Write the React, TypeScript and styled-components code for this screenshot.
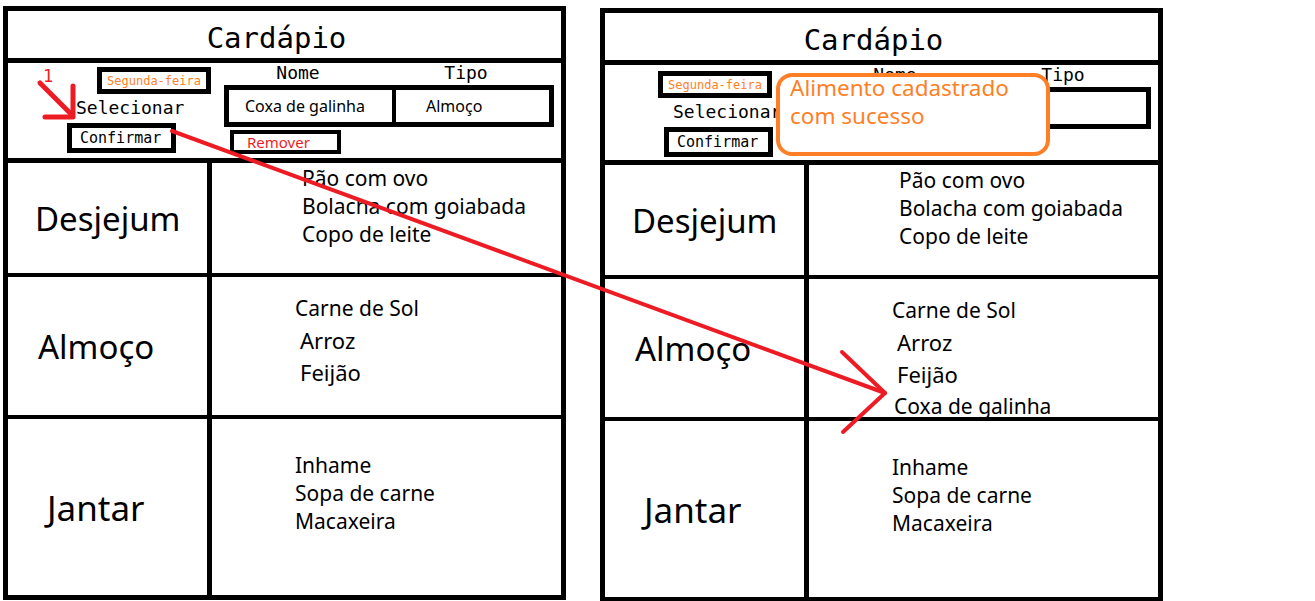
import React from 'react';
import styled, { createGlobalStyle } from 'styled-components';

const RED = '#ed1c24';
const ORANGE = '#ff7f27';
const MONO = '"DejaVu Sans Mono", monospace';
const SANS = '"Noto Sans", sans-serif';

const GlobalStyle = createGlobalStyle`
  html, body { margin: 0; padding: 0; background: #fff; }
  body {
    width: 1315px;
    height: 601px;
    overflow: hidden;
    font-family: ${SANS};
    color: #000;
  }
`;

type Item = { text: string; indent: number; size?: number };
type Meal = {
  label: string;
  labelPad: number;
  labelSize: number;
  top: number;
  lh: number;
  items: Item[];
};

const baseMeals = (extra: Item[]): Meal[] => [
  {
    label: 'Desjejum',
    labelPad: 27,
    labelSize: 33,
    top: 1,
    lh: 28,
    items: [
      { text: 'Pão com ovo', indent: 90 },
      { text: 'Bolacha com goiabada', indent: 90 },
      { text: 'Copo de leite', indent: 90 },
    ],
  },
  {
    label: 'Almoço',
    labelPad: 30,
    labelSize: 33,
    top: 15,
    lh: 32,
    items: [
      { text: 'Carne de Sol', indent: 83 },
      { text: 'Arroz', indent: 88, size: 22 },
      { text: 'Feijão', indent: 88, size: 22 },
      ...extra,
    ],
  },
  {
    label: 'Jantar',
    labelPad: 39,
    labelSize: 35,
    top: 32,
    lh: 28,
    items: [
      { text: 'Inhame', indent: 83 },
      { text: 'Sopa de carne', indent: 83 },
      { text: 'Macaxeira', indent: 83 },
    ],
  },
];

const Page = styled.div`
  position: relative;
  display: flex;
  align-items: flex-start;
  gap: 34px;
  padding-left: 3px;
  width: 1315px;
  height: 601px;
  box-sizing: border-box;
`;

const Panel = styled.section<{ $top: number }>`
  margin-top: ${(p) => p.$top}px;
  width: 563px;
  height: 594px;
  box-sizing: border-box;
  border: 5px solid #000;
  display: flex;
  flex-direction: column;
`;

const TitleBar = styled.header`
  height: 52px;
  box-sizing: border-box;
  border-bottom: 5px solid #000;
  display: flex;
  justify-content: center;
  padding: 7px 16px 0 0;
  font: 29px ${MONO};
  line-height: 40px;
`;

const Controls = styled.div`
  position: relative;
  height: 100px;
  box-sizing: border-box;
  border-bottom: 5px solid #000;
  display: flex;
`;

const DayColumn = styled.div`
  width: 216px;
  flex: 0 0 auto;
  display: flex;
  flex-direction: column;
  align-items: flex-start;
`;

const DayBox = styled.div<{ $left: number; $top: number }>`
  margin: ${(p) => p.$top}px 0 0 ${(p) => p.$left}px;
  width: 114px;
  height: 27px;
  box-sizing: border-box;
  border: 5px solid #000;
  display: flex;
  align-items: center;
  justify-content: center;
  color: ${ORANGE};
  font: 12px ${MONO};
`;

const SelectLabel = styled.div`
  margin: 2px 0 0 68px;
  font: 18px ${MONO};
  line-height: 24px;
`;

const ConfirmButton = styled.div`
  margin: 3px 0 0 59px;
  width: 109px;
  height: 30px;
  box-sizing: border-box;
  border: 5px solid #000;
  display: flex;
  align-items: center;
  padding-left: 8px;
  font: 15px ${MONO};
`;

const FormColumn = styled.div`
  display: flex;
  flex-direction: column;
  align-items: flex-start;
`;

const HeaderRow = styled.div`
  display: flex;
  height: 22px;
  font: 18px ${MONO};
  line-height: 20px;
`;

const HeaderCell = styled.div<{ $w: number }>`
  width: ${(p) => p.$w}px;
  text-align: center;
`;

const Field = styled.div`
  display: flex;
  width: 330px;
  height: 42px;
  box-sizing: border-box;
  border: 5px solid #000;
  font: 16px ${SANS};
`;

const FieldCell = styled.div<{ $w?: number; $pad: number }>`
  ${(p) => (p.$w ? `width: ${p.$w}px; border-right: 4px solid #000;` : 'flex: 1;')}
  box-sizing: border-box;
  display: flex;
  align-items: center;
  padding-left: ${(p) => p.$pad}px;
`;

const RemoveButton = styled.div`
  margin: 3px 0 0 6px;
  width: 111px;
  height: 24px;
  box-sizing: border-box;
  border: 4px solid #000;
  display: flex;
  align-items: center;
  padding-left: 13px;
  color: ${RED};
  font: 15px ${SANS};
`;

const Toast = styled.div`
  position: absolute;
  left: 171px;
  top: 8px;
  width: 274px;
  height: 83px;
  box-sizing: border-box;
  border: 4px solid ${ORANGE};
  border-radius: 16px;
  background: #fff;
  padding: 0 10px;
  color: ${ORANGE};
  font: 22.5px ${SANS};
  line-height: 28px;
`;

const ToastText = styled.p`
  margin: -3px 0 0;
`;

const Row = styled.div<{ $h?: number }>`
  display: flex;
  ${(p) => (p.$h ? `height: ${p.$h}px; border-bottom: 4px solid #000;` : 'flex: 1;')}
  box-sizing: content-box;
`;

const MealLabel = styled.div<{ $pad: number; $size: number }>`
  width: 204px;
  flex: 0 0 auto;
  border-right: 5px solid #000;
  display: flex;
  align-items: center;
  padding-left: ${(p) => p.$pad}px;
  box-sizing: border-box;
  font: ${(p) => p.$size}px ${SANS};
`;

const MealItems = styled.ul<{ $top: number; $lh: number }>`
  margin: 0;
  padding: ${(p) => p.$top}px 0 0 0;
  list-style: none;
  line-height: ${(p) => p.$lh}px;
`;

const MealItem = styled.li<{ $indent: number; $size?: number }>`
  padding-left: ${(p) => p.$indent}px;
  font: ${(p) => p.$size ?? 21}px ${SANS};
  line-height: inherit;
`;

const Annotations = styled.svg`
  position: absolute;
  left: 0;
  top: 0;
  pointer-events: none;
`;

const rowHeights = [110, 138, 0];

const MenuPanel: React.FC<{
  top: number;
  dayLeft: number;
  dayTop: number;
  food: string;
  kind: string;
  meals: Meal[];
  toast?: boolean;
}> = ({ top, dayLeft, dayTop, food, kind, meals, toast }) => (
  <Panel $top={top}>
    <TitleBar>Cardápio</TitleBar>
    <Controls>
      <DayColumn>
        <DayBox $left={dayLeft} $top={dayTop}>Segunda-feira</DayBox>
        <SelectLabel>Selecionar</SelectLabel>
        <ConfirmButton>Confirmar</ConfirmButton>
      </DayColumn>
      <FormColumn>
        <HeaderRow>
          <HeaderCell $w={148}>Nome</HeaderCell>
          <HeaderCell $w={188}>Tipo</HeaderCell>
        </HeaderRow>
        <Field>
          <FieldCell $w={167} $pad={16}>{food}</FieldCell>
          <FieldCell $pad={30}>{kind}</FieldCell>
        </Field>
        {!toast && <RemoveButton>Remover</RemoveButton>}
      </FormColumn>
      {toast && (
        <Toast>
          <ToastText>
            Alimento cadastrado
            <br />
            com sucesso
          </ToastText>
        </Toast>
      )}
    </Controls>
    {meals.map((m, i) => (
      <Row key={m.label} $h={rowHeights[i] || undefined}>
        <MealLabel $pad={m.labelPad} $size={m.labelSize}>{m.label}</MealLabel>
        <MealItems $top={m.top} $lh={m.lh}>
          {m.items.map((it) => (
            <MealItem key={it.text} $indent={it.indent} $size={it.size}>
              {it.text}
            </MealItem>
          ))}
        </MealItems>
      </Row>
    ))}
  </Panel>
);

export default function App() {
  return (
    <>
      <GlobalStyle />
      <Page>
        <MenuPanel
          top={6}
          dayLeft={89}
          dayTop={4}
          food="Coxa de galinha"
          kind="Almoço"
          meals={baseMeals([])}
        />
        <MenuPanel
          top={8}
          dayLeft={53}
          dayTop={6}
          food=""
          kind=""
          meals={baseMeals([{ text: 'Coxa de galinha', indent: 85 }])}
          toast
        />
        <Annotations width={1315} height={601} viewBox="0 0 1315 601">
          <g stroke={RED} strokeWidth={4} strokeLinecap="round" strokeLinejoin="round" fill="none">
            <line x1={172} y1={131} x2={885} y2={393} />
            <polyline points="842,352 885,393 843,432" />
            <line x1={40} y1={83} x2={72} y2={115} strokeWidth={5} />
            <polyline points="73,86 73,117 45,117" strokeWidth={5} />
          </g>
          <text x={43} y={82} fill={RED} fontFamily="DejaVu Sans Mono, monospace" fontSize={17}>
            1
          </text>
        </Annotations>
      </Page>
    </>
  );
}
